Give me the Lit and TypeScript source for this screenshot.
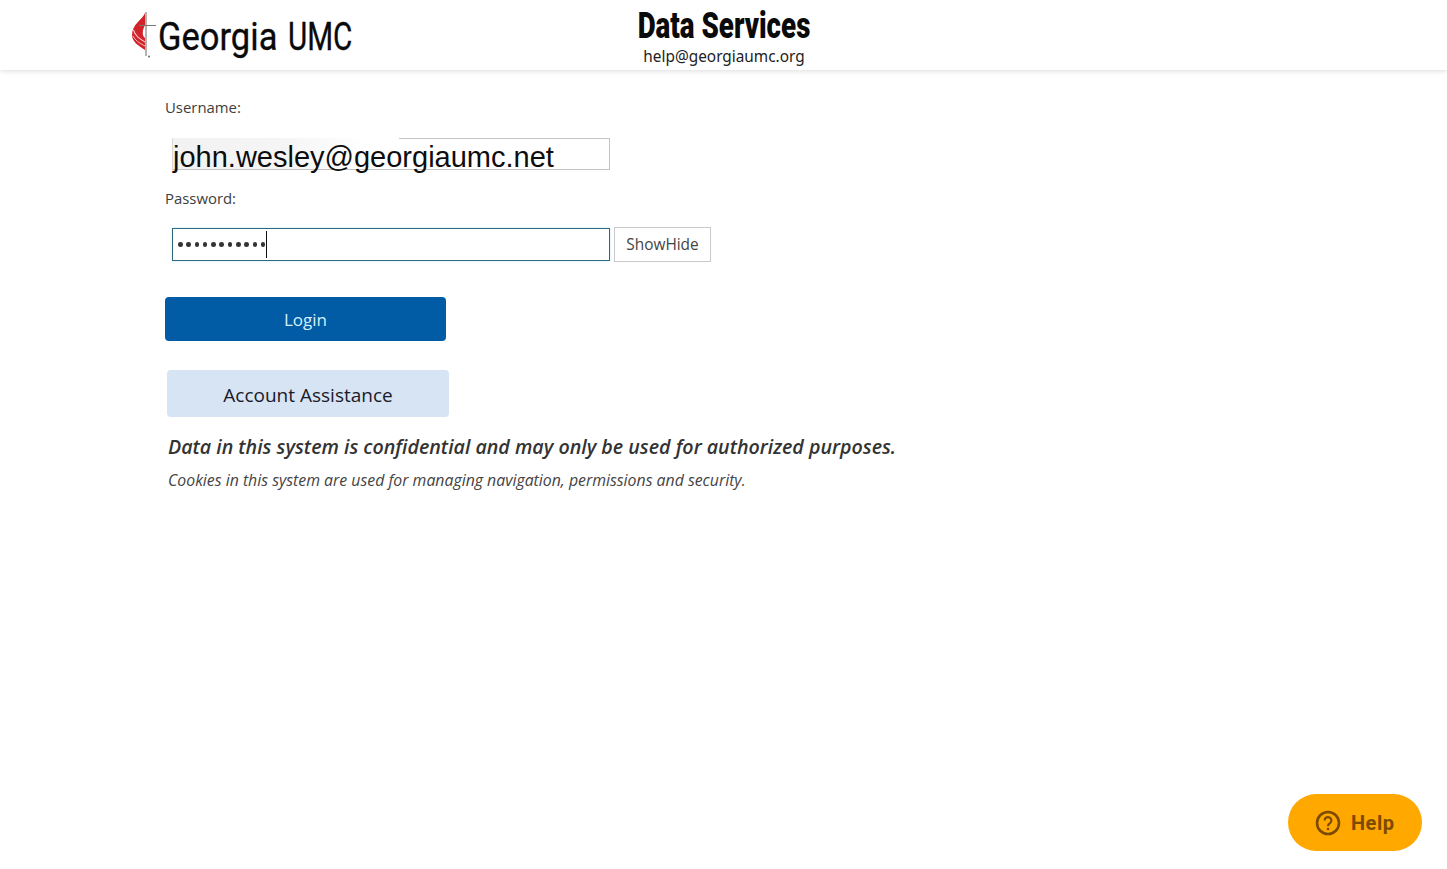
import { LitElement, html, css } from "lit";
import { customElement } from "lit/decorators.js";

@customElement("app-root")
export class AppRoot extends LitElement {
  static styles = css`
    :host { display: block; height: 869px; background: #fff; font-family: "Open Sans", "Noto Sans", sans-serif; color: #333; position: relative; overflow: hidden; }
    * { box-sizing: border-box; }
    header { height: 70px; display: grid; grid-template-columns: minmax(0,1fr) auto minmax(0,1fr); background: #fff; box-shadow: 0 1px 5px rgba(0,0,0,.14); }
    .brand { display: flex; align-items: flex-start; padding: 12px 0 0 130px; }
    .logo { width: 27px; height: 46px; flex: none; }
    .wordmark { display: flex; margin-left: 1px; font: 400 39px/50px "Roboto", sans-serif; color: #0a0a0a; white-space: nowrap; -webkit-text-stroke: .35px #0a0a0a; }
    .georgia { display: block; width: 118px; transform: scaleX(.885); transform-origin: left center; }
    .umc { display: block; width: 65px; margin-left: 12px; transform: scaleX(.76); transform-origin: left center; }
    .center { text-align: center; display: flex; flex-direction: column; align-items: center; }
    .title { font: 900 36px/36px "Roboto", sans-serif; color: #0a0a0a; white-space: nowrap; margin-top: 8px; height: 38px; width: 174px; display: flex; justify-content: center; transform: scaleX(.77); }
    .mail { font: 400 16px/20px "Noto Sans", sans-serif; color: #222; transform: scaleX(.96); }
    main { padding: 27px 0 0 165px; }
    label { display: block; font-size: 14.9px; line-height: 20px; color: #3d3d3d; }
    .row { display: flex; align-items: center; margin-left: 7px; }
    .user { margin-top: 21px; width: 438px; height: 32px; border: solid #c4c4c4; border-width: 0 1px 1px 1px; border-left-color: #d8d8d8;
      background:
        linear-gradient(90deg, transparent 226px, #c4c4c4 226px) top / 100% 1px no-repeat,
        linear-gradient(90deg, #f2f2f2 0, #f5f5f5 110px, #fff 195px);
      font: 400 29px/36px "Liberation Sans", sans-serif; color: #0d0d0d; padding-top: 7px; white-space: nowrap; }
    .pw-label { margin-top: 18px; }
    .pw-row { margin-top: 19px; gap: 4px; }
    .pw { width: 438px; height: 33px; border: 1px solid #2a6a7c; box-shadow: 0 0 3px rgba(120,210,230,.35); display: flex; align-items: center; padding-left: 5px; }
    .dots { display: flex; gap: 3.7px; }
    .dots i { width: 4.6px; height: 4.6px; border-radius: 50%; background: #333; display: block; }
    .caret { width: 1px; height: 27px; background: #111; margin-left: 1px; }
    .toggle { width: 97px; height: 35px; border: 1px solid #c9c9c9; background: #fff; display: flex; align-items: center; justify-content: center; font-size: 15.4px; color: #444; }
    .login { margin-top: 35px; width: 281px; height: 44px; border-radius: 4px; background: #015ba5; color: #d4f0fb; display: flex; align-items: center; justify-content: center; font-size: 17px; }
    .assist { margin: 29px 0 0 2px; width: 282px; height: 47px; border-radius: 4px; background: #d7e4f3; color: #1a1a2a; display: flex; align-items: center; justify-content: center; font-size: 19px; padding-top: 2px; }
    .note { margin: 16px 0 0 3px; font-size: 19.63px; line-height: 27px; font-weight: 600; font-style: italic; color: #333; white-space: nowrap; }
    .sub { margin: 10px 0 0 3px; font-size: 15.83px; line-height: 21px; font-style: italic; color: #444; white-space: nowrap; }
    .help { position: absolute; left: 1288px; top: 794px; width: 134px; height: 57px; border-radius: 29px; background: #ffa800; display: flex; align-items: center; padding-left: 27px; gap: 10px; color: #7c4a00; font: 700 20px/1 "Roboto", sans-serif; letter-spacing: .5px; }
    .help svg { width: 26px; height: 26px; flex: none; }
  `;

  render() {
    return html`
      <header>
        <div class="brand">
          <svg class="logo" viewBox="0 0 27 46">
            <path d="M15 1 C13 7 2 12 2 23 C2 30 9 34 15 38 L15 26 C12 24 12 19 15 13 Z" fill="#d2232a"/>
            <path d="M15 30 C10 27 5 24 3.5 18" fill="none" stroke="#f7c4c4" stroke-width="1.1"/>
            <path d="M15 34 C9 31 5 28 3 24" fill="none" stroke="#f7c4c4" stroke-width="1"/>
            <path d="M16 0 V44 M9 13.5 H26" fill="none" stroke="#777" stroke-width="1.1"/>
            <circle cx="19" cy="44.5" r="1" fill="#666"/>
          </svg>
          <div class="wordmark"><span class="georgia">Georgia</span><span class="umc">UMC</span></div>
        </div>
        <div class="center">
          <div class="title"><span>Data Services</span></div>
          <div class="mail">help@georgiaumc.org</div>
        </div>
        <div></div>
      </header>
      <main>
        <label>Username:</label>
        <div class="row user">john.wesley@georgiaumc.net</div>
        <label class="pw-label">Password:</label>
        <div class="row pw-row">
          <div class="pw">
            <span class="dots">${Array.from({ length: 11 }, () => html`<i></i>`)}</span>
            <span class="caret"></span>
          </div>
          <div class="toggle">ShowHide</div>
        </div>
        <div class="login">Login</div>
        <div class="assist">Account Assistance</div>
        <div class="note">Data in this system is confidential and may only be used for authorized purposes.</div>
        <div class="sub">Cookies in this system are used for managing navigation, permissions and security.</div>
      </main>
      <div class="help">
        <svg viewBox="0 0 26 26" fill="none" stroke="#7c4a00" stroke-width="2.6">
          <circle cx="13" cy="13" r="11"/>
          <path d="M9.6 10.4 a3.4 3.4 0 1 1 5.4 2.8 c-1.3.9-2 1.5-2 3" stroke-width="2.2"/>
          <circle cx="13" cy="19" r="1.3" fill="#7c4a00" stroke="none"/>
        </svg>
        <span>Help</span>
      </div>
    `;
  }
}
